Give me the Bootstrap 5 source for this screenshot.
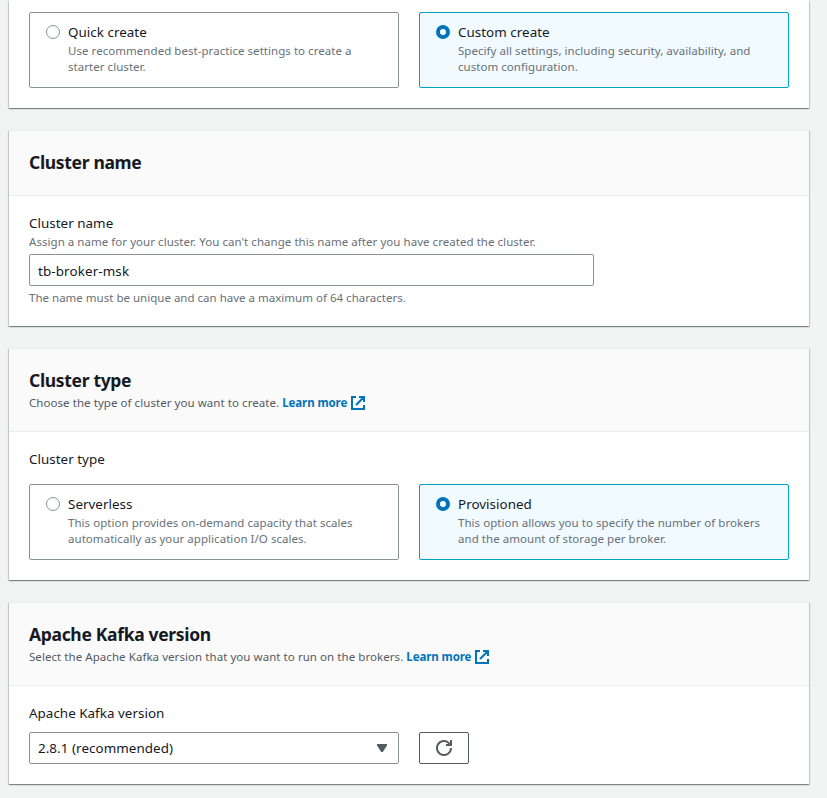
<!DOCTYPE html>
<html lang="en">
<head>
<meta charset="utf-8">
<meta name="viewport" content="width=device-width, initial-scale=1">
<title>Create cluster</title>
<link href="https://cdn.jsdelivr.net/npm/bootstrap@5.3.0/dist/css/bootstrap.min.css" rel="stylesheet">
<style>
body{background:#f2f3f3;color:#16191f;font-family:"Noto Sans","Open Sans",sans-serif;font-size:13.4px;line-height:22px;letter-spacing:.03px;height:798px;overflow:hidden}
.wizard{width:800px;margin-left:9px;gap:22px}
.panel{background:#fff;border-top:1px solid #eaeded;box-shadow:0 1px 1px 0 rgba(0,28,36,.3),1px 1px 1px 0 rgba(0,28,36,.15),-1px 1px 1px 0 rgba(0,28,36,.15)}
.panel-first{height:108px;padding-top:12px;border-top:0}
.panel-name{height:196px}
.panel-type{height:232px}
.panel-version{height:182px}
.panel-head{background:#fafafa;border-bottom:1px solid #eaeded;padding:19px 20px 0;height:83px}
.panel-name .panel-head{height:65px}
.panel-head h2{font-size:17.5px;font-weight:700;line-height:24px;margin:0 0 1px;letter-spacing:-.33px}
.panel-body{padding:16px 20px 0}
.hint{font-size:11.5px;line-height:16px;color:#687078;letter-spacing:.045px}
.constraint{letter-spacing:.01px}
.panel-head .hint{color:#545b64;line-height:20px;letter-spacing:.06px}
.type-label{margin-bottom:14px}
.tiles{gap:20px}
.tile{width:370px;height:76px;border:1px solid #879596;border-radius:2px;padding:8px 16px;gap:8px}
.tile.chosen{border-color:#00a1c9;background:#f1faff}
.tile .form-check-input{width:14px;height:14px;margin:4px 0 0;border:1px solid #879596;background:#fff;box-shadow:none}
.tile .form-check-input:checked{border:4px solid #0073bb;background:#fff}
.tile label{display:block}
.field,.field:focus{height:32px;border:1px solid #879596;border-radius:2px;padding:1px 8px 0;font-size:13.4px;line-height:22px;letter-spacing:.12px;color:#16191f;background:#fff;box-shadow:none}
.name-field{width:565px}
.field.version-field{width:370px;padding:0 11px 1px 8px;letter-spacing:.06px}
.refresh-btn,.refresh-btn:hover{width:50px;height:32px;border:1px solid #545b64;border-radius:2px;background:#fff;color:#545b64}
.more{color:#0073bb;font-weight:700;text-decoration:none;letter-spacing:-.1px}
svg{display:block}
.more svg{display:inline-block;vertical-align:-3px;margin-left:.5px}
</style>
</head>
<body>
<main class="wizard d-flex flex-column">
  <section class="panel panel-first px-3">
    <div class="tiles d-flex mx-1">
      <div class="tile d-flex">
        <input class="form-check-input flex-shrink-0" type="radio" name="method" id="quick">
        <div><label for="quick">Quick create</label><div class="hint">Use recommended best-practice settings to create a<br>starter cluster.</div></div>
      </div>
      <div class="tile chosen d-flex">
        <input class="form-check-input flex-shrink-0" type="radio" name="method" id="custom" checked>
        <div><label for="custom">Custom create</label><div class="hint">Specify all settings, including security, availability, and<br>custom configuration.</div></div>
      </div>
    </div>
  </section>

  <section class="panel panel-name">
    <header class="panel-head"><h2>Cluster name</h2></header>
    <div class="panel-body">
      <label for="name" class="d-block">Cluster name</label>
      <div class="hint mb-1">Assign a name for your cluster. You can't change this name after you have created the cluster.</div>
      <input class="form-control field name-field" id="name" type="text" value="tb-broker-msk">
      <div class="hint constraint mt-1">The name must be unique and can have a maximum of 64 characters.</div>
    </div>
  </section>

  <section class="panel panel-type">
    <header class="panel-head">
      <h2>Cluster type</h2>
      <div class="hint">Choose the type of cluster you want to create. <a class="more" href="#">Learn more <svg width="14" height="14" viewBox="0 0 14 14" fill="none" stroke="#0073bb" stroke-width="2"><path d="M5 1H1v12h12V9M8 1h5v5M13 1 5 9"/></svg></a></div>
    </header>
    <div class="panel-body">
      <div class="type-label">Cluster type</div>
      <div class="tiles d-flex">
        <div class="tile d-flex">
          <input class="form-check-input flex-shrink-0" type="radio" name="type" id="serverless">
          <div><label for="serverless">Serverless</label><div class="hint">This option provides on-demand capacity that scales<br>automatically as your application I/O scales.</div></div>
        </div>
        <div class="tile chosen d-flex">
          <input class="form-check-input flex-shrink-0" type="radio" name="type" id="provisioned" checked>
          <div><label for="provisioned">Provisioned</label><div class="hint">This option allows you to specify the number of brokers<br>and the amount of storage per broker.</div></div>
        </div>
      </div>
    </div>
  </section>

  <section class="panel panel-version">
    <header class="panel-head">
      <h2>Apache Kafka version</h2>
      <div class="hint">Select the Apache Kafka version that you want to run on the brokers. <a class="more" href="#">Learn more <svg width="14" height="14" viewBox="0 0 14 14" fill="none" stroke="#0073bb" stroke-width="2"><path d="M5 1H1v12h12V9M8 1h5v5M13 1 5 9"/></svg></a></div>
    </header>
    <div class="panel-body">
      <div class="mb-2">Apache Kafka version</div>
      <div class="tiles d-flex">
        <button class="field version-field d-flex align-items-center justify-content-between" type="button">2.8.1 (recommended)
          <svg width="10" height="8" viewBox="0 0 10 8" fill="#545b64"><path d="M0 0h10v1.5L5.8 8H4.2L0 1.5z"/></svg>
        </button>
        <button class="btn refresh-btn p-0 d-flex align-items-center justify-content-center" type="button" aria-label="Refresh">
          <svg width="16" height="16" viewBox="0 0 16 16" fill="none" stroke="#545b64" stroke-width="2"><path d="M15 8A7 7 0 1 1 13 3.1L14.5 4.8M15 0v5h-5"/></svg>
        </button>
      </div>
    </div>
  </section>
</main>
<script src="https://cdn.jsdelivr.net/npm/bootstrap@5.3.0/dist/js/bootstrap.bundle.min.js"></script>
</body>
</html>
